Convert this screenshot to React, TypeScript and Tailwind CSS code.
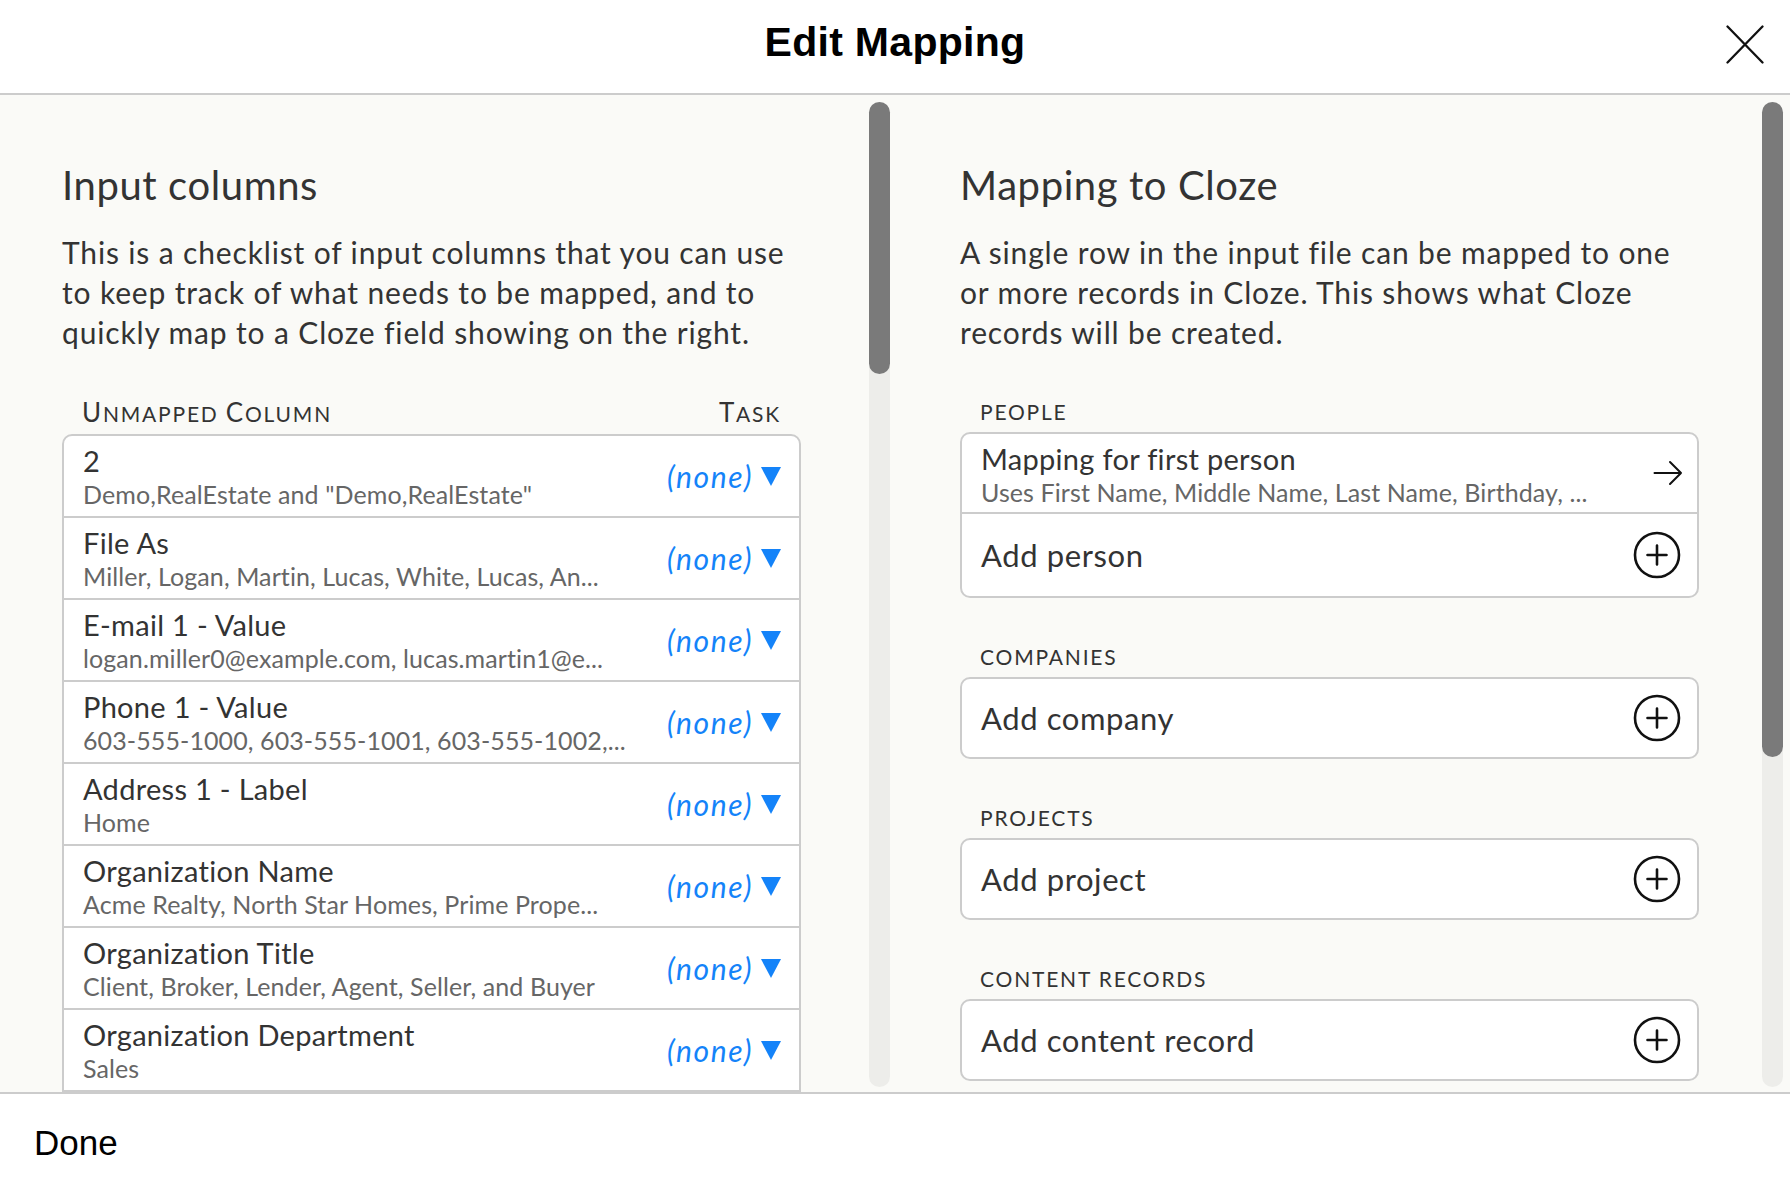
import React from "react";

const inputRows = [
  { title: "2", sub: 'Demo,RealEstate and "Demo,RealEstate"' },
  { title: "File As", sub: "Miller, Logan, Martin, Lucas, White, Lucas, An..." },
  { title: "E-mail 1 - Value", sub: "logan.miller0@example.com, lucas.martin1@e..." },
  { title: "Phone 1 - Value", sub: "603-555-1000, 603-555-1001, 603-555-1002,..." },
  { title: "Address 1 - Label", sub: "Home" },
  { title: "Organization Name", sub: "Acme Realty, North Star Homes, Prime Prope..." },
  { title: "Organization Title", sub: "Client, Broker, Lender, Agent, Seller, and Buyer" },
  { title: "Organization Department", sub: "Sales" },
];

const sections = [
  { label: "COMPANIES", add: "Add company" },
  { label: "PROJECTS", add: "Add project" },
  { label: "CONTENT RECORDS", add: "Add content record" },
];

const PlusCircle = () => (
  <svg width="48" height="48" viewBox="0 0 48 48" fill="none" stroke="#111" strokeWidth="2.6">
    <circle cx="24" cy="24" r="22" />
    <path d="M24 14.5v19M14.5 24h19" strokeLinecap="round" />
  </svg>
);

const ArrowRight = () => (
  <svg width="30" height="26" viewBox="0 0 30 26" fill="none" stroke="#111" strokeWidth="2" strokeLinecap="round" strokeLinejoin="round">
    <path d="M1.5 13h26.5M17 2l11 11-11 11" />
  </svg>
);

const Caret = () => (
  <svg width="20" height="19" viewBox="0 0 20 19">
    <path d="M0 0h20L10 19z" fill="#1483f9" />
  </svg>
);

const Scrollbar = ({ thumb }: { thumb: number }) => (
  <div className="w-[21px] shrink-0 mt-[7px] mb-[5px] rounded-full bg-[#ededea]">
    <div className="w-full rounded-full bg-[#7a7a7a]" style={{ height: thumb }} />
  </div>
);

const Intro = ({ title, text }: { title: string; text: string }) => (
  <>
    <h2 className="text-[40px] leading-[46px] tracking-[0.6px] text-[#333]">{title}</h2>
    <p className="mt-[24px] w-[740px] text-[30px] leading-[40px] tracking-[0.85px] text-[#333]">{text}</p>
  </>
);

const Label = ({ children, first }: { children: React.ReactNode; first?: boolean }) => (
  <div
    className={
      (first ? "mt-[48px]" : "mt-[47px]") +
      " px-[20px] text-[21px] leading-[24px] tracking-[1.8px] text-[#333] flex justify-between"
    }
  >
    {children}
  </div>
);

export default function App() {
  return (
    <div className="w-[1790px] h-[1192px] flex flex-col bg-white overflow-hidden font-['Lato',sans-serif]">
      <header className="h-[95px] shrink-0 border-b-2 border-[#cccccc] grid grid-cols-[1fr_auto_1fr]">
        <div />
        <h1 className="pt-[18px] text-[41px] leading-[48px] tracking-[0.3px] font-bold text-black font-['Liberation_Sans',Arial,sans-serif]">
          Edit Mapping
        </h1>
        <div className="flex justify-end pr-[26px] pt-[25px]">
          <svg width="38" height="39" viewBox="0 0 38 39" stroke="#111" strokeWidth="2.3" strokeLinecap="round">
            <path d="M1.5 1.5l35 36M36.5 1.5l-35 36" />
          </svg>
        </div>
      </header>

      <main className="flex-1 min-h-0 flex bg-[#fafaf7] overflow-hidden">
        {/* left column */}
        <section className="w-[895px] shrink-0 flex">
          <div className="w-[801px] shrink-0 pl-[62px] pt-[67px]">
            <Intro
              title="Input columns"
              text="This is a checklist of input columns that you can use to keep track of what needs to be mapped, and to quickly map to a Cloze field showing on the right."
            />
            <Label first>
              <span>
                <span className="text-[26px]">U</span>NMAPPED <span className="text-[26px]">C</span>OLUMN
              </span>
              <span>
                <span className="text-[26px]">T</span>ASK
              </span>
            </Label>
            <div className="mt-[8px] border-2 border-[#cccccc] rounded-[10px] bg-white divide-y-2 divide-[#cccccc] overflow-hidden">
              {inputRows.map((r) => (
                <div key={r.title} className="h-[82px] flex items-center pl-[19px] pr-[18px]">
                  <div className="flex-1 min-w-0 self-start pt-[7px]">
                    <div className="text-[29px] leading-[36px] tracking-[0.3px] text-[#333] whitespace-nowrap">{r.title}</div>
                    <div className="text-[25px] leading-[30px] tracking-[0.1px] text-[#666] whitespace-nowrap">{r.sub}</div>
                  </div>
                  <span className="italic text-[30px] leading-[34px] tracking-[1.6px] text-[#1483f9]">(none)</span>
                  <span className="ml-[8px] flex">
                    <Caret />
                  </span>
                </div>
              ))}
              <div className="h-[82px]" />
            </div>
          </div>
          <div className="ml-[68px] flex">
            <Scrollbar thumb={272} />
          </div>
        </section>

        {/* right column */}
        <section className="flex-1 flex">
          <div className="w-[804px] shrink-0 pl-[65px] pt-[67px]">
            <Intro
              title="Mapping to Cloze"
              text="A single row in the input file can be mapped to one or more records in Cloze. This shows what Cloze records will be created."
            />
            <Label first>PEOPLE</Label>
            <div className="mt-[8px] border-2 border-[#cccccc] rounded-[10px] bg-white divide-y-2 divide-[#cccccc] overflow-hidden">
              <div className="h-[80px] flex items-center pl-[19px] pr-[14px]">
                <div className="flex-1 min-w-0 self-start pt-[7px]">
                  <div className="text-[29px] leading-[36px] tracking-[0.3px] text-[#333]">Mapping for first person</div>
                  <div className="text-[25px] leading-[30px] tracking-[0.1px] text-[#666] whitespace-nowrap">
                    Uses First Name, Middle Name, Last Name, Birthday, ...
                  </div>
                </div>
                <ArrowRight />
              </div>
              <div className="h-[82px] flex items-center pl-[19px] pr-[16px]">
                <span className="flex-1 text-[31px] leading-[36px] tracking-[0.6px] text-[#333]">Add person</span>
                <PlusCircle />
              </div>
            </div>
            {sections.map((s) => (
              <div key={s.label}>
                <Label>{s.label}</Label>
                <div className="mt-[8px] h-[82px] border-2 border-[#cccccc] rounded-[10px] bg-white flex items-center pl-[19px] pr-[16px]">
                  <span className="flex-1 text-[31px] leading-[36px] tracking-[0.6px] text-[#333]">{s.add}</span>
                  <PlusCircle />
                </div>
              </div>
            ))}
          </div>
          <div className="ml-[63px] flex">
            <Scrollbar thumb={655} />
          </div>
        </section>
      </main>

      <footer className="h-[100px] shrink-0 border-t-2 border-[#cccccc] flex items-center pl-[34px]">
        <span className="text-[35px] leading-[40px] text-black font-['Liberation_Sans',Arial,sans-serif]">Done</span>
      </footer>
    </div>
  );
}
